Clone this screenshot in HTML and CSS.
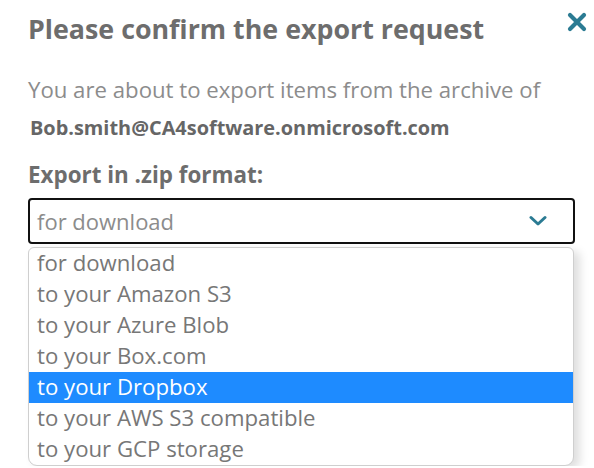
FILE: index.html
```html
<!DOCTYPE html>
<html>
<head>
<meta charset="utf-8">
<link rel="stylesheet" href="styles.css">
</head>
<body>
<div class="dialog">
  <div class="header">
    <h1 class="title">Please confirm the export request</h1>
    <button class="close" aria-label="Close">
      <svg width="20" height="20" viewBox="0 0 20 20"><path d="M3 3 L17 17 M17 3 L3 17" stroke="#2b7b93" stroke-width="4.2" stroke-linecap="round"/></svg>
    </button>
  </div>
  <p class="intro">You are about to export items from the archive of</p>
  <p class="email">Bob.smith@CA4software.onmicrosoft.com</p>
  <label class="label">Export in .zip format:</label>
  <div class="select-wrap">
    <div class="select">
      <span class="value">for download</span>
      <svg class="chev" width="18" height="12" viewBox="0 0 18 12"><path d="M2 2.5 L9 9 L16 2.5" fill="none" stroke="#2b7b93" stroke-width="3" stroke-linecap="round" stroke-linejoin="round"/></svg>
    </div>
    <ul class="menu">
      <li class="opt">for download</li>
      <li class="opt">to your Amazon S3</li>
      <li class="opt">to your Azure Blob</li>
      <li class="opt">to your Box.com</li>
      <li class="opt selected">to your Dropbox</li>
      <li class="opt">to your AWS S3 compatible</li>
      <li class="opt">to your GCP storage</li>
    </ul>
  </div>
</div>
</body>
</html>
```
FILE: styles.css
```css
html, body {
  margin: 0;
  padding: 0;
  background: #ffffff;
}
body {
  font-family: "Open Sans", "Noto Sans", sans-serif;
}
.dialog {
  padding: 8px 5px 0 28px;
}
.header {
  display: flex;
  justify-content: space-between;
  align-items: flex-start;
}
.title {
  margin: 0;
  font-size: 26.8px;
  font-weight: 700;
  color: #6d6d6d;
  line-height: 42px;
}
.close {
  background: none;
  border: 0;
  padding: 0;
  margin-top: 2px;
  width: 24px;
  height: 24px;
  display: flex;
  align-items: center;
  justify-content: center;
}
.intro {
  margin: 25px 0 0;
  font-size: 22.2px;
  color: #8c8c8c;
  line-height: 30px;
}
.email {
  margin: 10px 0 0 2px;
  font-size: 19.9px;
  font-weight: 700;
  color: #666666;
  line-height: 26px;
}
.label {
  display: block;
  margin-top: 19px;
  font-size: 22.4px;
  font-weight: 700;
  color: #6d6d6d;
  line-height: 30px;
}
.select-wrap {
  margin-top: 8px;
  width: 547px;
}
.select {
  box-sizing: border-box;
  height: 46px;
  border: 2px solid #111;
  border-radius: 4px;
  display: flex;
  align-items: center;
  justify-content: space-between;
  padding: 0 26px 0 7px;
  background: #fff;
}
.value {
  font-size: 22px;
  color: #8c8c8c;
}
.chev {
  display: block;
}
.menu {
  width: 546px;
  box-sizing: border-box;
  margin: 3px 0 0;
  padding: 0;
  list-style: none;
  background: #fff;
  border: 1px solid #cfcfcf;
  border-radius: 6px 6px 9px 9px;
  box-shadow: 6px 4px 10px rgba(0, 0, 0, 0.13);
  overflow: hidden;
}
.opt {
  height: 31px;
  line-height: 30px;
  padding-left: 8px;
  font-size: 22.2px;
  color: #777777;
}
.opt.selected {
  background: #1e8bff;
  color: #ffffff;
}
```
